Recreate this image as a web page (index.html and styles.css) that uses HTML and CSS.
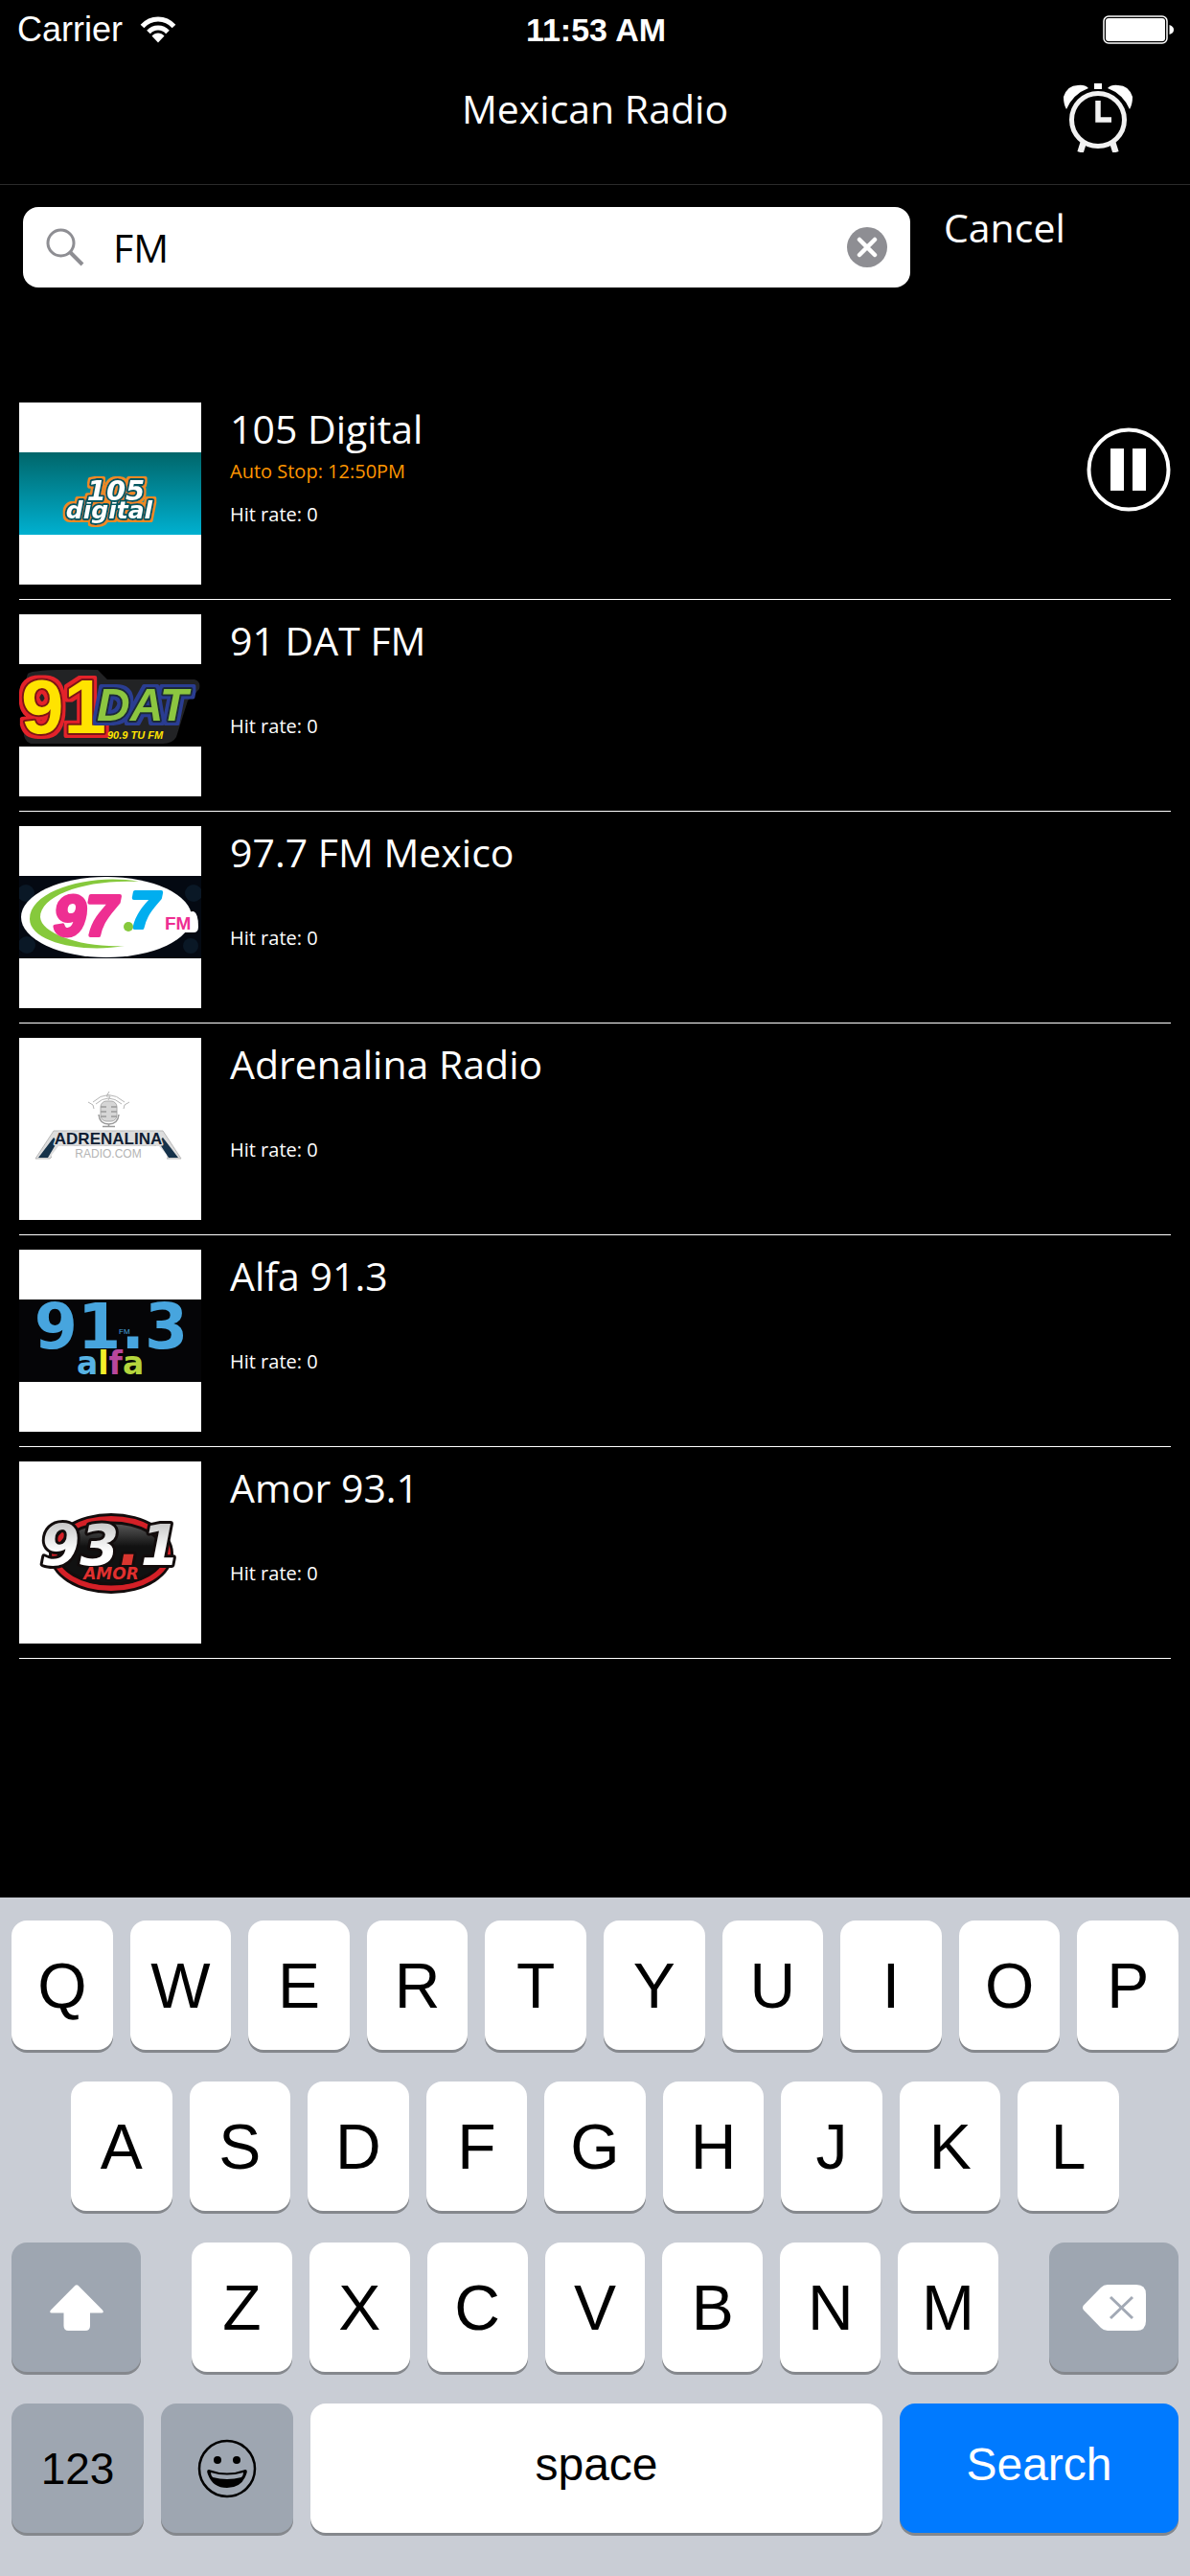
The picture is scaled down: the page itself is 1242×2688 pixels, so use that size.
FILE: index.html
```html
<!DOCTYPE html>
<html lang="en">
<head>
<meta charset="utf-8">
<meta name="viewport" content="width=device-width, initial-scale=1">
<title>Mexican Radio</title>
<link rel="stylesheet" href="styles.css">
</head>
<body>
<div class="status">
  <div class="carrier">
    <span>Carrier</span>
    <svg width="38" height="28" viewBox="0 0 38 28" aria-hidden="true">
      <g fill="none" stroke="#fff" stroke-width="5">
        <path d="M2.500 10.500C11.500 .5 26.500 .5 35.500 10.500"/>
        <path d="M9 16.500C14.500 10.500 23.500 10.500 29 16.500"/>
      </g>
      <path fill="#fff" d="M12.500 20.500C16 16.500 22 16.500 25.500 20.500L19 27.500Z"/>
    </svg>
  </div>
  <time class="clock">11:53 AM</time>
  <svg class="battery" width="75" height="30" viewBox="0 0 75 30" aria-hidden="true">
    <rect x="1" y="1" width="66" height="28" rx="5" fill="none" stroke="#fff" stroke-width="1.500"/>
    <rect x="3" y="3" width="62" height="24" rx="3" fill="#fff"/>
    <path d="M69.500 10C73 11 74 13 74 15S73 19 69.500 20Z" fill="#fff"/>
  </svg>
</div>

<header class="topbar">
  <h1 class="topbar-title">Mexican Radio</h1>
  <button class="plain alarm" type="button" aria-label="Alarm">
    <svg width="72" height="72" viewBox="0 0 72 72">
      <g fill="none" stroke="#f2f2f2">
        <circle cx="36" cy="38" r="27.500" stroke-width="5"/>
        <path d="M36 18V38H50" stroke-width="5.500"/>
        <path d="M21 61L17.500 72M51 61L54.500 72" stroke-width="6.500"/>
      </g>
      <path fill="#fff" d="M32 0H40V6H32ZM3 27Q0 22 0 14Q4 2 15 2Q22 1 26 5Q10 11 3 27ZM69 27Q72 22 72 14Q68 2 57 2Q50 1 46 5Q62 11 69 27Z"/>
    </svg>
  </button>
</header>

<main>
  <form class="search">
    <div class="field">
      <svg width="40" height="40" viewBox="0 0 40 40" fill="none" stroke="#8e8e93" aria-hidden="true">
        <circle cx="15.500" cy="15.500" r="13.500" stroke-width="3"/>
        <path d="M25 25L38 38" stroke-width="4"/>
      </svg>
      <input class="query" type="text" value="FM" aria-label="Search stations">
      <button class="plain clear" type="button" aria-label="Clear">
        <svg width="42" height="42" viewBox="0 0 42 42">
          <circle cx="21" cy="21" r="21" fill="#8e8e93"/>
          <path d="M13 13L29 29M29 13L13 29" stroke="#fff" stroke-width="4.500" stroke-linecap="round"/>
        </svg>
      </button>
    </div>
    <button class="plain cancel" type="button">Cancel</button>
  </form>

  <ul class="stations">
    <li class="station">
      <svg class="logo" viewBox="0 0 190 190" role="img" aria-label="105 Digital logo">
        <defs>
          <linearGradient id="teal" x1="0" y1="0" x2="0" y2="1"><stop offset="0" stop-color="#00666a"/><stop offset="1" stop-color="#00b0d0"/></linearGradient>
          <filter id="orange-rim" x="-10%" y="-20%" width="120%" height="140%">
            <feMorphology in="SourceAlpha" operator="dilate" radius="2" result="grown"/>
            <feFlood flood-color="#f08a24"/><feComposite in2="grown" operator="in"/>
            <feMerge><feMergeNode/><feMergeNode in="SourceGraphic"/></feMerge>
          </filter>
        </defs>
        <rect width="190" height="190" fill="#fff"/>
        <rect y="52" width="190" height="86" fill="url(#teal)"/>
        <g class="wide-italic" text-anchor="middle" stroke-linejoin="round" filter="url(#orange-rim)" fill="#fff" stroke="#06565e" stroke-width="4" paint-order="stroke">
          <text x="94" y="121" font-size="25">digital</text>
          <text x="101" y="102" font-size="29">105</text>
        </g>
      </svg>
      <div class="info">
        <h2 class="name">105 Digital</h2>
        <p class="autostop">Auto Stop: 12:50PM</p>
        <p class="hits">Hit rate: 0</p>
      </div>
      <button class="plain pause" type="button" aria-label="Pause">
        <svg width="88" height="88" viewBox="0 0 88 88">
          <circle cx="44" cy="44" r="41.500" fill="none" stroke="#fff" stroke-width="4"/>
          <path d="M25 22H39V66H25ZM48 22H62V66H48Z" fill="#fff"/>
        </svg>
      </button>
    </li>
    <li class="station">
      <svg class="logo" viewBox="0 0 190 190" role="img" aria-label="91 DAT FM logo">
        <defs>
          <filter id="red-rim" x="-10%" y="-10%" width="120%" height="120%">
            <feMorphology in="SourceAlpha" operator="dilate" radius="3" result="grown"/>
            <feFlood flood-color="#e3232b"/><feComposite in2="grown" operator="in"/>
            <feMerge><feMergeNode/><feMergeNode in="SourceGraphic"/></feMerge>
          </filter>
          <filter id="blue-rim" x="-10%" y="-10%" width="120%" height="120%">
            <feMorphology in="SourceAlpha" operator="dilate" radius="3" result="grown"/>
            <feFlood flood-color="#2c3d92"/><feComposite in2="grown" operator="in"/>
            <feMerge><feMergeNode/><feMergeNode in="SourceGraphic"/></feMerge>
          </filter>
        </defs>
        <rect width="190" height="190" fill="#fff"/>
        <rect y="52" width="190" height="86" fill="#000"/>
        <path d="M9 62Q14 57 82 58L92 68H183Q190 70 188 78L176 90L164 128Q160 135 150 135H12Q3 132 5 116L14 104Q2 98 2 84Z" fill="#222325"/>
        <g stroke-linejoin="round" paint-order="stroke">
          <text class="bold" x="2" y="124" font-size="80" fill="#ffe300" stroke="#7a1414" stroke-width="4" filter="url(#red-rim)">91</text>
          <text class="bold-italic" x="81" y="111" font-size="48" fill="#8cc63f" stroke="#1b2b38" stroke-width="4" filter="url(#blue-rim)">DAT</text>
        </g>
        <text class="bold-italic" x="92" y="130" font-size="11" fill="#ffe300">90.9 TU FM</text>
      </svg>
      <div class="info">
        <h2 class="name">91 DAT FM</h2>
        <p class="autostop"></p>
        <p class="hits">Hit rate: 0</p>
      </div>
    </li>
    <li class="station">
      <svg class="logo" viewBox="0 0 190 190" role="img" aria-label="97.7 FM Mexico logo">
        <rect width="190" height="190" fill="#fff"/>
        <rect y="52" width="190" height="86" fill="#040912"/>
        <g fill="#0a1826"><circle cx="7" cy="70" r="9"/><circle cx="182" cy="70" r="9"/><circle cx="8" cy="124" r="9"/><circle cx="179" cy="125" r="8"/></g>
        <ellipse cx="91" cy="95" rx="89" ry="42" fill="#fff"/>
        <path d="M146 92L182 89Q187 91 187 105Q187 111 182 111H146Z" fill="#fff"/>
        <path d="M125 58C77 49 11 66 11 97C11 121 65 133 110 125C64 127 23 112 22 95C22 72 70 55 125 58Z" fill="#86c93c"/>
        <g class="bold-italic" stroke-linejoin="round" stroke-width="4">
          <text x="36" y="114" font-size="60" fill="#ee2f92" stroke="#ee2f92">97</text>
          <text x="116" y="106" font-size="54" fill="#00aeef" stroke="#00aeef">7</text>
        </g>
        <circle cx="114" cy="105" r="5" fill="#86c93c"/>
        <text class="bold" x="152" y="108" font-size="19" fill="#ee2f92">FM</text>
      </svg>
      <div class="info">
        <h2 class="name">97.7 FM Mexico</h2>
        <p class="autostop"></p>
        <p class="hits">Hit rate: 0</p>
      </div>
    </li>
    <li class="station">
      <svg class="logo" viewBox="0 0 190 190" role="img" aria-label="Adrenalina Radio logo">
        <rect width="190" height="190" fill="#fff"/>
        <rect x="85" y="66" width="17" height="21" rx="6" fill="#d6d6d6" stroke="#aaa"/>
        <g fill="none" stroke="#9a9a9a">
          <path d="M83 80Q84 90 93.500 90Q103 90 104 80M93.500 90V93M87 92.500H100M85 72H91M96 72H102M85 77H91M96 77H102M85 82H91M96 82H102" stroke-width="1.500"/>
          <path d="M77 67Q93 52 110 67M80 69Q93 57 107 69M72 67L77 70L78 74M115 67L110 70L109 74M94 56L91 61H95L93 65" stroke="#b5b5b5"/>
        </g>
        <path d="M36 97H150L169 126H154L143 113H45L32 126H17Z" fill="#ddd" stroke="#b9b9b9"/>
        <path d="M41 113H146L154 122V127H34V122Z" fill="#fff"/>
        <path d="M36 104L40 108L30 125H20ZM150 104L145 108L156 125H166Z" fill="#15324a"/>
        <g text-anchor="middle" stroke-linejoin="round">
          <text class="bold" x="93" y="111" font-size="17" fill="#101d33" stroke="#ddd" stroke-width="3" paint-order="stroke">ADRENALINA</text>
          <text class="regular" x="93" y="125" font-size="12" fill="#b4b4b4">RADIO.COM</text>
        </g>
      </svg>
      <div class="info">
        <h2 class="name">Adrenalina Radio</h2>
        <p class="autostop"></p>
        <p class="hits">Hit rate: 0</p>
      </div>
    </li>
    <li class="station">
      <svg class="logo" viewBox="0 0 190 190" role="img" aria-label="Alfa 91.3 logo">
        <rect width="190" height="190" fill="#fff"/>
        <rect y="52" width="190" height="86" fill="#050507"/>
        <text class="wide" x="96" y="103" font-size="65" text-anchor="middle" fill="#47a5de">91.3</text>
        <text class="regular" x="104" y="88" font-size="8" fill="#47a5de">FM</text>
        <text class="wide" x="60" y="130" font-size="33"><tspan fill="#58b4e4">a</tspan><tspan fill="#f3ee2a">l</tspan><tspan fill="#b8479d">f</tspan><tspan fill="#b5d63d">a</tspan></text>
      </svg>
      <div class="info">
        <h2 class="name">Alfa 91.3</h2>
        <p class="autostop"></p>
        <p class="hits">Hit rate: 0</p>
      </div>
    </li>
    <li class="station">
      <svg class="logo" viewBox="0 0 190 190" role="img" aria-label="Amor 93.1 logo">
        <defs>
          <linearGradient id="steel" x1="0" y1="0" x2="0" y2="1"><stop offset="0" stop-color="#b4b4b4"/><stop offset=".6" stop-color="#fff"/></linearGradient>
          <linearGradient id="coal" x1="0" y1="0" x2="0" y2="1"><stop offset="0" stop-color="#666"/><stop offset=".4" stop-color="#111"/></linearGradient>
        </defs>
        <rect width="190" height="190" fill="#fff"/>
        <ellipse cx="96" cy="96" rx="65" ry="42" fill="#120c0c"/>
        <ellipse cx="96" cy="96" rx="59" ry="36" fill="url(#coal)" stroke="#d42027" stroke-width="6"/>
        <ellipse cx="96" cy="96" rx="55" ry="32" fill="none" stroke="#120c0c" stroke-width="3"/>
        <text class="wide-italic" x="95" y="108" font-size="59" text-anchor="middle" fill="url(#steel)" stroke="#120c0c" stroke-width="6" stroke-linejoin="round" paint-order="stroke">93<tspan fill="#d9362f">.</tspan>1</text>
        <text class="wide-italic" x="96" y="123" font-size="17" text-anchor="middle" fill="#e0302f" stroke="#120c0c" stroke-width="2" paint-order="stroke">AMOR</text>
      </svg>
      <div class="info">
        <h2 class="name">Amor 93.1</h2>
        <p class="autostop"></p>
        <p class="hits">Hit rate: 0</p>
      </div>
    </li>
  </ul>
</main>

<section class="keyboard" aria-label="Keyboard">
  <div class="keys">
    <button class="key">Q</button><button class="key">W</button><button class="key">E</button><button class="key">R</button><button class="key">T</button><button class="key">Y</button><button class="key">U</button><button class="key">I</button><button class="key">O</button><button class="key">P</button>
  </div>
  <div class="keys inset">
    <button class="key">A</button><button class="key">S</button><button class="key">D</button><button class="key">F</button><button class="key">G</button><button class="key">H</button><button class="key">J</button><button class="key">K</button><button class="key">L</button>
  </div>
  <div class="shift-row">
    <button class="key dark" aria-label="Shift">
      <svg width="56" height="48" viewBox="0 0 56 48"><path d="M26.500 .8Q28 -.4 29.500 .8L55 26.500Q57 29.500 54 29.500H42V43Q42 48 37 48H19.500Q14.500 48 14.500 43V29.500H2Q-1 29.500 1 26.500Z" fill="#fff"/></svg>
    </button>
    <div class="keys">
      <button class="key">Z</button><button class="key">X</button><button class="key">C</button><button class="key">V</button><button class="key">B</button><button class="key">N</button><button class="key">M</button>
    </div>
    <button class="key dark" aria-label="Delete">
      <svg width="66" height="48" viewBox="0 0 66 48"><path d="M26 0H56Q66 0 66 10V38Q66 48 56 48H26Q22 48 19 45L1 26.500Q-1 24 1 21.500L19 3Q22 0 26 0Z" fill="#fff"/><path d="M29 13L52 35M52 13L29 35" stroke="#a2a9b5" stroke-width="3"/></svg>
    </button>
  </div>
  <div class="space-row">
    <button class="key dark number">123</button>
    <button class="key dark" aria-label="Emoji">
      <svg width="62" height="62" viewBox="0 0 62 62">
        <circle cx="31" cy="31" r="29" fill="none" stroke="#000" stroke-width="2.500"/>
        <circle cx="21" cy="22" r="4"/><circle cx="41" cy="22" r="4"/>
        <path d="M12 32Q31 39 50 32Q53 32 51 37Q46 51 31 51Q16 51 11 37Q9 32 12 32Z"/>
        <path d="M14 35Q31 40 48 35Q48 38 46 40Q31 44 16 40Q14 38 14 35Z" fill="#9ea6b1"/>
      </svg>
    </button>
    <button class="key word">space</button>
    <button class="key word go">Search</button>
  </div>
</section>
</body>
</html>
```

FILE: styles.css
```css
* {
  box-sizing: border-box;
}

body {
  display: flex;
  flex-direction: column;
  min-height: 100vh;
  margin: 0;
  background: #000;
  color: #fff;
  font-family: "Open Sans", "Noto Sans", sans-serif;
}

h1,
h2,
p,
ul {
  margin: 0;
  padding: 0;
  font-weight: 400;
}

svg {
  display: block;
}

button,
input {
  margin: 0;
  padding: 0;
  border: 0;
  outline: 0;
  font-family: inherit;
}

.plain {
  background: none;
  color: inherit;
}

/* Status bar */
.status {
  display: grid;
  grid-template-columns: 1fr auto 1fr;
  align-items: center;
  height: 62px;
  padding: 0 16px 0 18px;
  font-family: "Liberation Sans", Arial, sans-serif;
}

.carrier {
  display: flex;
  align-items: center;
  gap: 18px;
  font-size: 36px;
}

.clock {
  font-size: 34px;
  font-weight: 700;
}

.battery {
  justify-self: end;
}

/* Title bar */
.topbar {
  display: grid;
  grid-template-columns: 1fr auto 1fr;
  align-items: start;
  padding: 25px 60px 33px;
  border-bottom: 1px solid #2b2b2b;
}

.topbar-title {
  grid-column: 2;
  font-size: 41px;
  line-height: 52px;
}

.alarm {
  justify-self: end;
}

/* Search */
.search {
  display: grid;
  grid-template-columns: 1fr 233px;
  align-items: start;
  gap: 35px;
  padding: 17px 24px 0;
}

.field {
  display: flex;
  align-items: center;
  height: 84px;
  margin-top: 6px;
  padding: 0 24px;
  border-radius: 16px;
  background: #fff;
}

.query {
  flex: 1;
  min-width: 0;
  padding: 0 30px;
  background: none;
  color: #000;
  font-size: 41px;
}

.cancel {
  font-size: 41px;
  line-height: 54px;
  text-align: left;
}

/* Station list */
.stations {
  margin: 105px 20px 0;
  list-style: none;
}

.station {
  display: grid;
  grid-template-columns: 190px 1fr auto;
  column-gap: 30px;
  padding: 15px 0;
  border-bottom: 1px solid #fff;
}

.logo {
  width: 190px;
  height: 190px;
}

.name {
  font-size: 41px;
  line-height: 54px;
}

.autostop {
  min-height: 36px;
  color: #ff9500;
  font-size: 20px;
  line-height: 36px;
}

.hits {
  font-size: 20px;
  line-height: 54px;
}

.pause {
  align-self: start;
  padding-top: 26px;
}

.regular,
.bold,
.bold-italic {
  font-family: "Liberation Sans", Arial, sans-serif;
}

.bold,
.bold-italic,
.wide,
.wide-italic {
  font-weight: 700;
}

.wide,
.wide-italic {
  font-family: "DejaVu Sans", Verdana, sans-serif;
}

.bold-italic,
.wide-italic {
  font-style: italic;
}

/* Keyboard */
.keyboard {
  display: grid;
  gap: 33px;
  margin-top: auto;
  padding: 24px 12px 45px;
  background: #c9cdd5;
  font-family: "Liberation Sans", Arial, sans-serif;
}

.keys {
  display: grid;
  grid-auto-flow: column;
  grid-auto-columns: 1fr;
  gap: 18px;
}

.inset {
  padding: 0 62px;
}

.shift-row {
  display: grid;
  grid-template-columns: 135px 1fr 135px;
  gap: 53px;
}

.space-row {
  display: grid;
  grid-template-columns: 138px 138px 1fr 291px;
  gap: 18px;
}

.key {
  display: flex;
  align-items: center;
  justify-content: center;
  height: 135px;
  border-radius: 16px;
  background: #fff;
  box-shadow: 0 3px #85888d;
  color: #000;
  font-size: 66px;
}

.dark {
  background: #9ea6b1;
}

.number {
  font-size: 46px;
}

.word {
  padding-bottom: 8px;
  font-size: 48px;
}

.go {
  background: #007aff;
  color: #fff;
}
```
